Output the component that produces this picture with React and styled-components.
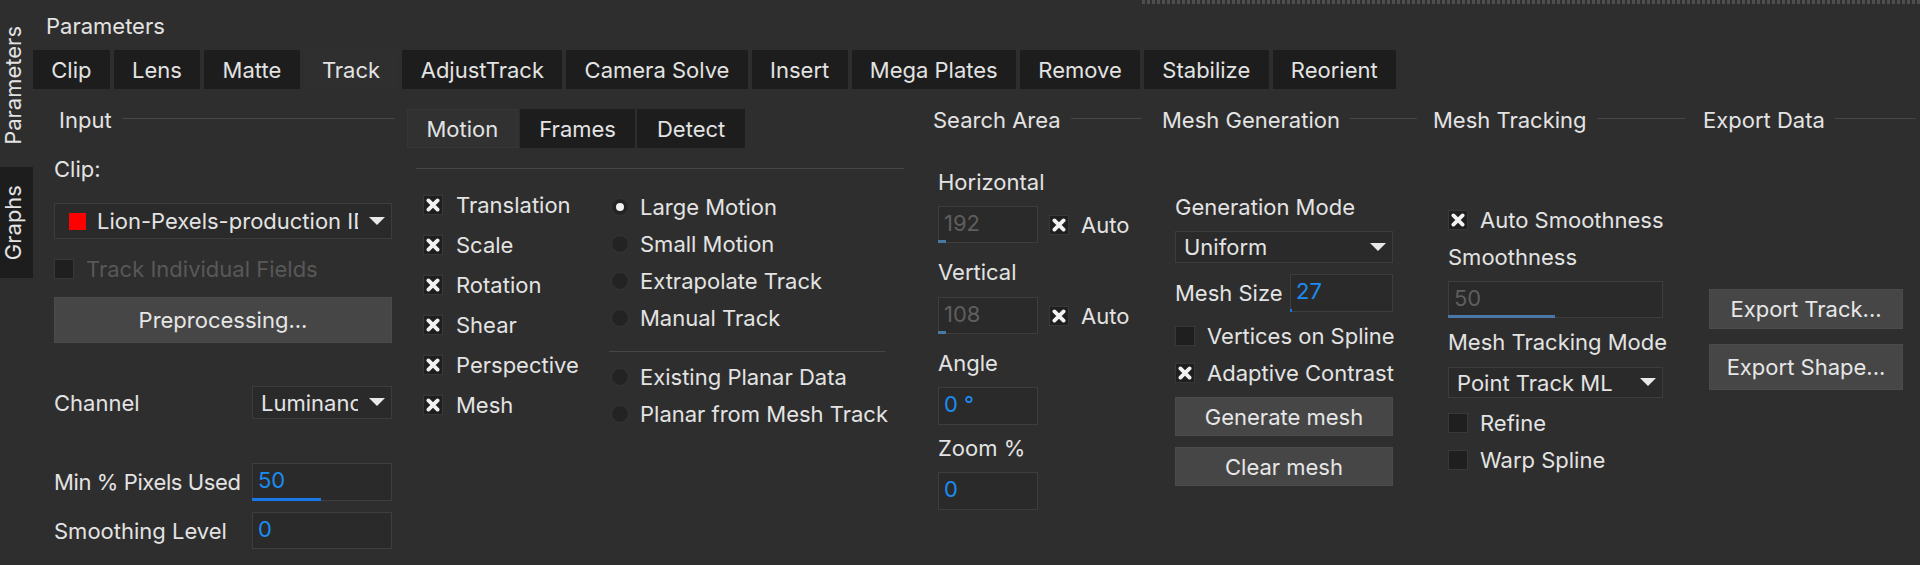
import React from "react"
import styled, {createGlobalStyle} from "styled-components"

const GlobalStyle = createGlobalStyle`
  html, body {
    margin: 0;
    padding: 0;
    background: #2e2e2e;
  }
  body {
    font-family: Inter, "Noto Sans", sans-serif;
    font-size: 22px;
    color: #e3e3e3;
  }
`

const topTabs = ["Clip", "Lens", "Matte", "Track", "AdjustTrack", "Camera Solve", "Insert", "Mega Plates", "Remove", "Stabilize", "Reorient"]
const motionKinds = ["Translation", "Scale", "Rotation", "Shear", "Perspective", "Mesh"]
const trackModes = ["Large Motion", "Small Motion", "Extrapolate Track", "Manual Track"]
const planarModes = ["Existing Planar Data", "Planar from Mesh Track"]

function CheckMark() {
    return (
        <svg width="14" height="14" viewBox="0 0 14 14">
            <path d="M2.4 2.4 L11.6 11.6 M11.6 2.4 L2.4 11.6" stroke="#f2f2f2" strokeWidth="3.8" strokeLinecap="round"/>
        </svg>
    )
}

function Caret() {
    return (
        <svg width="16" height="9" viewBox="0 0 16 9">
            <polygon points="0,0 16,0 8,8" fill="#e8e8e8"/>
        </svg>
    )
}

function Check({label, checked, disabled, mt}) {
    return (
        <CheckRow $mt={mt} $disabled={disabled}>
            <Box>{checked && <CheckMark/>}</Box>
            {label}
        </CheckRow>
    )
}

function Radio({label, selected}) {
    return (
        <RadioRow>
            <Dot>{selected && <DotFill/>}</Dot>
            {label}
        </RadioRow>
    )
}

function Field({value, w, h, fill = 0, dim, mt}) {
    return (
        <FieldBox $w={w} $h={h} $dim={dim} $mt={mt}>
            {value}
            {fill > 0 && <ValueBar $dim={dim} style={{width: `${fill * 100}%`}}/>}
        </FieldBox>
    )
}

function Select({children, w, h, mt, swatch}) {
    return (
        <SelectBox $w={w} $h={h} $mt={mt} $swatch={swatch}>
            {swatch && <Swatch/>}
            <SelectText>{children}</SelectText>
            <Caret/>
        </SelectBox>
    )
}

export default function App() {
    return (
        <>
        <GlobalStyle/>
        <Page>
            <Sidebar>
                <SideTab $h={160} $mt={5}><SideLabel>Parameters</SideLabel></SideTab>
                <SideTab $h={111} $mt={2} $dark><SideLabel>Graphs</SideLabel></SideTab>
            </Sidebar>
            <Main>
                <Grip/>
                <Title>Parameters</Title>
                <TabBar>
                    {topTabs.map(t => <Tab key={t} $active={t === "Track"}>{t}</Tab>)}
                </TabBar>
                <Content>
                    <Column>
                        <SectionHeader $ml={5} $mr={12}>Input</SectionHeader>
                        <Body $w={338}>
                            <Label $mt={17}>Clip:</Label>
                            <Select w={338} h={36} mt={22} swatch>Lion-Pexels-production ID 15440021</Select>
                            <Check label="Track Individual Fields" disabled mt={18}/>
                            <Button $h={46} $mt={16}>Preprocessing...</Button>
                            <FieldRow $mt={43}>
                                <Label>Channel</Label>
                                <Select w={140} h={33}>Luminance</Select>
                            </FieldRow>
                            <FieldRow $mt={44}>
                                <Label $tight>Min % Pixels Used</Label>
                                <Field value="50" w={140} h={38} fill={0.5}/>
                            </FieldRow>
                            <FieldRow $mt={11}>
                                <Label>Smoothing Level</Label>
                                <Field value="0" w={140} h={37}/>
                            </FieldRow>
                        </Body>
                    </Column>

                    <Column>
                        <SubTabs>
                            <SubTab $active>Motion</SubTab>
                            <SubTab>Frames</SubTab>
                            <SubTab>Detect</SubTab>
                        </SubTabs>
                        <Rule $w={488} $ml={9} $mt={20}/>
                        <Options>
                            <CheckList>
                                {motionKinds.map(k => <MotionCheck key={k}><Box><CheckMark/></Box>{k}</MotionCheck>)}
                            </CheckList>
                            <RadioList>
                                {trackModes.map((m, i) => <Radio key={m} label={m} selected={i === 0}/>)}
                                <Rule $w={276} $ml={-2} $mt={15} $mb={6}/>
                                {planarModes.map(m => <Radio key={m} label={m}/>)}
                            </RadioList>
                        </Options>
                    </Column>

                    <Column>
                        <SectionHeader $mr={20}>Search Area</SectionHeader>
                        <Body $pl={5}>
                            <Label $mt={30}>Horizontal</Label>
                            <FieldRow $mt={12} $start>
                                <Field value="192" w={100} h={37} fill={0.08} dim/>
                                <Check label="Auto" checked/>
                            </FieldRow>
                            <Label $mt={17}>Vertical</Label>
                            <FieldRow $mt={13} $start>
                                <Field value="108" w={100} h={37} fill={0.08} dim/>
                                <Check label="Auto" checked/>
                            </FieldRow>
                            <Label $mt={17}>Angle</Label>
                            <Field value="0 °" w={100} h={38} mt={12}/>
                            <Label $mt={11}>Zoom %</Label>
                            <Field value="0" w={100} h={38} mt={12}/>
                        </Body>
                    </Column>

                    <Column>
                        <SectionHeader $mr={16}>Mesh Generation</SectionHeader>
                        <Body $pl={13} $w={231}>
                            <Label $mt={55}>Generation Mode</Label>
                            <Select w={218} h={32} mt={12}>Uniform</Select>
                            <FieldRow $mt={11}>
                                <Label>Mesh Size</Label>
                                <Field value="27" w={103} h={38} fill={0.02}/>
                            </FieldRow>
                            <Check label="Vertices on Spline" mt={12}/>
                            <Check label="Adaptive Contrast" checked mt={13}/>
                            <Button $h={39} $mt={12}>Generate mesh</Button>
                            <Button $h={39} $mt={11}>Clear mesh</Button>
                        </Body>
                    </Column>

                    <Column>
                        <SectionHeader $mr={18}>Mesh Tracking</SectionHeader>
                        <Body $pl={15} $w={230}>
                            <Check label="Auto Smoothness" checked mt={68}/>
                            <Label $mt={13}>Smoothness</Label>
                            <Field value="50" w={215} h={37} fill={0.5} dim mt={12}/>
                            <Label $mt={12}>Mesh Tracking Mode</Label>
                            <Select w={215} h={31} mt={13}>Point Track ML</Select>
                            <Check label="Refine" mt={13}/>
                            <Check label="Warp Spline" mt={13}/>
                        </Body>
                    </Column>

                    <Column>
                        <SectionHeader $mr={4}>Export Data</SectionHeader>
                        <Body $pl={6} $w={200}>
                            <Button $h={40} $mt={149}>Export Track...</Button>
                            <Button $h={46} $mt={15}>Export Shape...</Button>
                        </Body>
                    </Column>
                </Content>
            </Main>
        </Page>
        </>
    )
}

const Page = styled.div`
    display: flex;
    width: 1920px;
    height: 565px;
    overflow: hidden;
    background: #2e2e2e;
`

const Sidebar = styled.div`
    display: flex;
    flex-direction: column;
    width: 33px;
    flex-shrink: 0;
`

const SideTab = styled.div`
    display: flex;
    align-items: center;
    padding-left: 1px;
    height: ${p => p.$h}px;
    margin-top: ${p => p.$mt || 0}px;
    background: ${p => p.$dark ? "#1d1d1d" : "transparent"};
`

const SideLabel = styled.span`
    writing-mode: vertical-rl;
    transform: rotate(180deg);
    line-height: 24px;
    white-space: nowrap;
`

const Main = styled.div`
    flex: 1;
    display: flex;
    flex-direction: column;
    min-width: 0;
`

const Grip = styled.div`
    align-self: flex-end;
    width: 778px;
    height: 4px;
    background: repeating-linear-gradient(90deg, #4e4e4e 0 3px, transparent 3px 5px);
`

const Title = styled.div`
    margin-top: 10px;
    padding-left: 13px;
    line-height: 24px;
`

const TabBar = styled.div`
    display: flex;
    gap: 4px;
    margin-top: 12px;
`

const Tab = styled.div`
    height: 39px;
    display: flex;
    align-items: center;
    padding: 0 18.3px;
    white-space: nowrap;
    background: ${p => p.$active ? "#2f2f2f" : "#1d1d1d"};
`

const Content = styled.div`
    display: grid;
    grid-template-columns: 353px 526px 229px 271px 270px 217px;
    margin-top: 11px;
    padding-left: 21px;
`

const Column = styled.div`
    display: flex;
    flex-direction: column;
`

const SectionHeader = styled.div`
    display: flex;
    align-items: center;
    gap: 10px;
    height: 40px;
    margin-left: ${p => p.$ml || 0}px;
    margin-right: ${p => p.$mr || 0}px;
    white-space: nowrap;

    &::after {
        content: "";
        flex: 1;
        height: 1px;
        margin-top: -3px;
        background: #464646;
    }
`

const Body = styled.div`
    display: flex;
    flex-direction: column;
    align-items: flex-start;
    padding-left: ${p => p.$pl || 0}px;
    width: ${p => p.$w ? `${p.$w}px` : "auto"};
    box-sizing: border-box;
`

const Label = styled.div`
    height: 24px;
    line-height: 24px;
    white-space: nowrap;
    margin-top: ${p => p.$mt || 0}px;
    letter-spacing: ${p => p.$tight ? "-0.4px" : "normal"};
`

const FieldRow = styled.div`
    display: flex;
    align-items: center;
    justify-content: ${p => p.$start ? "flex-start" : "space-between"};
    gap: ${p => p.$start ? 11 : 0}px;
    align-self: stretch;
    margin-top: ${p => p.$mt || 0}px;
`

const FieldBox = styled.div`
    position: relative;
    box-sizing: border-box;
    width: ${p => p.$w}px;
    height: ${p => p.$h}px;
    margin-top: ${p => p.$mt || 0}px;
    padding: 4px 5px 0;
    line-height: 24px;
    background: #2a2a2a;
    border: 1px solid #3e3e3e;
    color: ${p => p.$dim ? "#5e5e5e" : "#1b8cf2"};
    flex-shrink: 0;
`

const ValueBar = styled.div`
    position: absolute;
    left: -1px;
    bottom: -1px;
    height: 3px;
    min-width: 2px;
    background: ${p => p.$dim ? "#4a78a6" : "#1a78e6"};
`

const SelectBox = styled.div`
    display: flex;
    align-items: center;
    gap: 11px;
    box-sizing: border-box;
    width: ${p => p.$w}px;
    height: ${p => p.$h}px;
    margin-top: ${p => p.$mt || 0}px;
    padding: 0 6px 0 ${p => p.$swatch ? 14 : 8}px;
    background: #2a2a2a;
    border: 1px solid #3c3c3c;
    flex-shrink: 0;
`

const Swatch = styled.div`
    width: 17px;
    height: 17px;
    background: #ff0000;
    flex-shrink: 0;
`

const SelectText = styled.span`
    flex: 1;
    overflow: hidden;
    white-space: nowrap;
    line-height: 24px;
`

const CheckRow = styled.div`
    display: flex;
    align-items: center;
    gap: 12px;
    height: 24px;
    white-space: nowrap;
    margin-top: ${p => p.$mt || 0}px;
    color: ${p => p.$disabled ? "#585858" : "inherit"};
`

const Box = styled.div`
    display: flex;
    align-items: center;
    justify-content: center;
    box-sizing: border-box;
    width: 20px;
    height: 20px;
    background: #1f1f1f;
    border: 1px solid #383838;
    flex-shrink: 0;
`

const Button = styled.button`
    align-self: stretch;
    height: ${p => p.$h}px;
    margin-top: ${p => p.$mt || 0}px;
    background: #464646;
    border: 1px solid #4b4b4b;
    color: #e6e6e6;
    font: inherit;
    padding: 0;
`

const SubTabs = styled.div`
    display: flex;
    gap: 2px;
    margin-top: 9px;
`

const SubTab = styled.div`
    height: 39px;
    box-sizing: border-box;
    display: flex;
    align-items: center;
    padding: 0 18.5px;
    background: ${p => p.$active ? "#313131" : "#1d1d1d"};
    border: 1px solid ${p => p.$active ? "#363636" : "#1d1d1d"};
`

const Rule = styled.div`
    width: ${p => p.$w}px;
    height: 1px;
    margin-left: ${p => p.$ml || 0}px;
    margin-top: ${p => p.$mt || 0}px;
    margin-bottom: ${p => p.$mb || 0}px;
    background: #464646;
`

const Options = styled.div`
    display: flex;
    padding-left: 16px;
    margin-top: 16px;
`

const CheckList = styled.div`
    display: flex;
    flex-direction: column;
    width: 188px;
`

const MotionCheck = styled.div`
    display: flex;
    align-items: center;
    gap: 13px;
    height: 40px;
    white-space: nowrap;
`

const RadioList = styled.div`
    display: flex;
    flex-direction: column;
    margin-top: 3px;
`

const RadioRow = styled.div`
    display: flex;
    align-items: center;
    gap: 11px;
    height: 37px;
    white-space: nowrap;
`

const Dot = styled.div`
    display: flex;
    align-items: center;
    justify-content: center;
    box-sizing: border-box;
    width: 18px;
    height: 18px;
    border-radius: 50%;
    background: #232323;
    border: 1px solid #353535;
`

const DotFill = styled.div`
    width: 8px;
    height: 8px;
    border-radius: 50%;
    background: #f0f0f0;
`
